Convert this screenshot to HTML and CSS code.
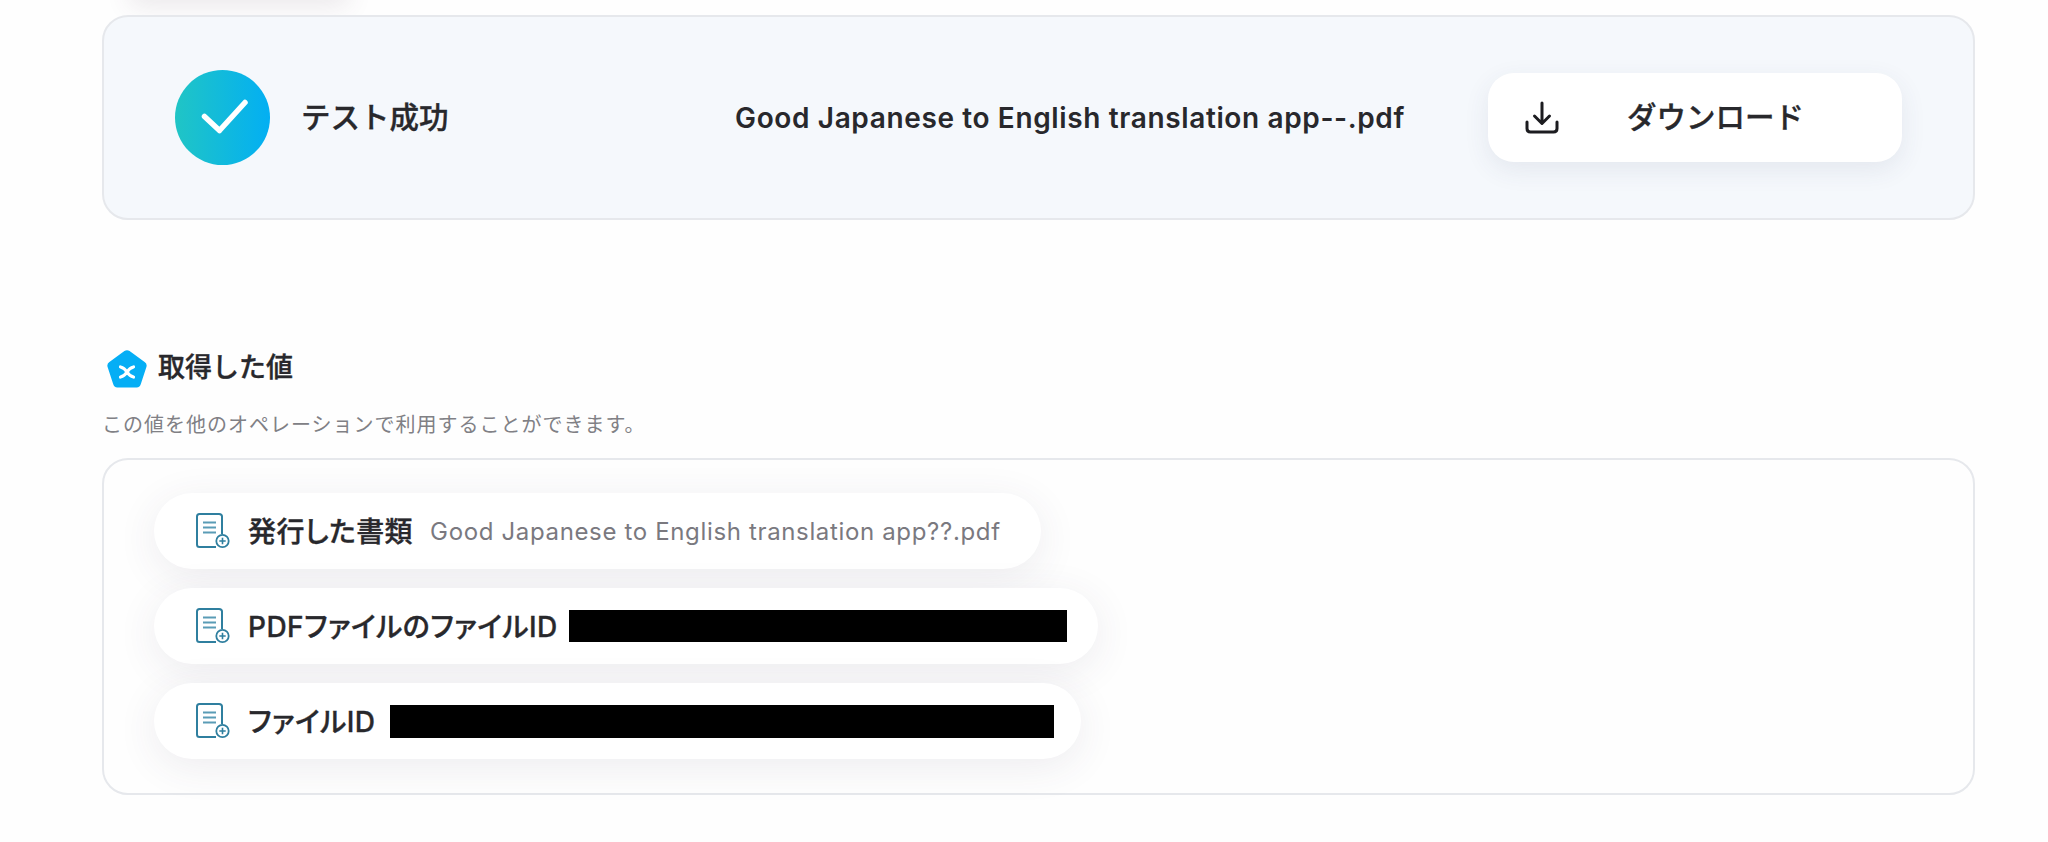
FILE: index.html
```html
<!DOCTYPE html>
<html lang="ja">
<head>
    <meta charset="UTF-8">
    <meta name="viewport" content="width=device-width, initial-scale=1.0">
    <title>テスト成功</title>
    <link rel="stylesheet" href="styles.css">
</head>
<body>
    <main class="page">
        <!-- Bottom edge of the element scrolled off above -->
        <div class="scrolled-shadow"></div>

        <section class="result-card">
            <svg class="check-badge" viewBox="0 0 95 95" aria-hidden="true">
                <defs>
                    <linearGradient id="badgeFill" x1="0" y1="0" x2="1" y2="0">
                        <stop offset="0" stop-color="#20c5c5"/>
                        <stop offset="1" stop-color="#03aff3"/>
                    </linearGradient>
                </defs>
                <circle cx="47.5" cy="47.5" r="47.5" fill="url(#badgeFill)"/>
                <path d="M29.5 46.5 L44.5 60.5 L70 32.5" fill="none" stroke="#fff" stroke-width="5.5" stroke-linecap="round" stroke-linejoin="round"/>
            </svg>
            <h2 class="result-title">テスト成功</h2>
            <span class="result-file">Good Japanese to English translation app--.pdf</span>
            <button class="download-button" type="button">
                <svg class="download-icon" viewBox="0 0 34 34" aria-hidden="true">
                    <path d="M17 2 V22 M9.5 15 L17 22.5 L24.5 15 M2 21 V27.5 Q2 31 5.5 31 H28.5 Q32 31 32 27.5 V21" fill="none" stroke="#1c1c20" stroke-width="3" stroke-linecap="round" stroke-linejoin="round"/>
                </svg>
                <span class="download-label">ダウンロード</span>
            </button>
        </section>

        <section class="values">
            <div class="values-heading">
                <svg class="values-icon" viewBox="0 0 40 38" aria-hidden="true">
                    <path d="M17.4 1 Q20 -0.6 22.6 1 L37.6 12 Q40.4 14 39.4 17 L34 33.6 Q33 37.6 29.6 37.6 L10.4 37.6 Q7 37.6 6 33.6 L0.6 17 Q-0.4 14 2.4 12 Z" fill="#05aef5"/>
                    <path d="M13.5 17 Q17.5 18 20 22 Q22.5 26 26.5 27 M26.5 17 Q22.5 18 20 22 Q17.5 26 13.5 27" fill="none" stroke="#fff" stroke-width="3.2" stroke-linecap="round"/>
                </svg>
                <h3 class="values-title">取得した値</h3>
            </div>
            <p class="values-note">この値を他のオペレーションで利用することができます。</p>

            <div class="values-box">
                <div class="value-pill">
                    <svg class="doc-icon" viewBox="0 0 34 36" aria-hidden="true"><use href="#docIcon"/></svg>
                    <span class="value-name">発行した書類</span>
                    <span class="value-text">Good Japanese to English translation app??.pdf</span>
                </div>
                <div class="value-pill">
                    <svg class="doc-icon" viewBox="0 0 34 36" aria-hidden="true"><use href="#docIcon"/></svg>
                    <span class="value-name">PDFファイルのファイルID</span>
                    <span class="redacted redacted-pdf"></span>
                </div>
                <div class="value-pill">
                    <svg class="doc-icon" viewBox="0 0 34 36" aria-hidden="true"><use href="#docIcon"/></svg>
                    <span class="value-name">ファイルID</span>
                    <span class="redacted redacted-file"></span>
                </div>
            </div>
        </section>
    </main>

    <svg class="svg-defs" aria-hidden="true">
        <symbol id="docIcon" viewBox="0 0 34 36">
            <path d="M20 34 H3.5 Q1 34 1 31.5 V3.5 Q1 1 3.5 1 H23 Q26 1 26 3.5 V21" fill="none" stroke="#2f7f9f" stroke-width="2"/>
            <path d="M7 9.5 H20 M7 14.5 H20 M7 19.5 H20" fill="none" stroke="#5a9cb6" stroke-width="2"/>
            <circle cx="26.5" cy="28" r="6.2" fill="#fff" stroke="#2f7f9f" stroke-width="1.8"/>
            <path d="M26.5 24.8 V31.2 M23.3 28 H29.7" fill="none" stroke="#2f7f9f" stroke-width="1.6"/>
        </symbol>
    </svg>
</body>
</html>
```

FILE: styles.css
```css
* {
    box-sizing: border-box;
}
html, body {
    height: 100%;
    overflow: hidden;
}
body {
    margin: 0;
    background: #fefefe;
    color: #28282c;
    font-family: Inter, 'Noto Sans CJK JP', sans-serif;
}
.page {
    padding: 15px 73px 0 102px;
}
.scrolled-shadow {
    width: 190px;
    height: 0;
    margin: -24px 0 24px 42px;
    box-shadow: 0 0 26px 14px rgba(80, 60, 80, 0.12);
}
.svg-defs {
    display: none;
}

/* Result card */
.result-card {
    display: flex;
    align-items: center;
    height: 205px;
    padding: 0 71px 0 71px;
    background: #f5f8fc;
    border: 2px solid #e6e8ec;
    border-radius: 26px;
}
.check-badge {
    flex: none;
    width: 95px;
    height: 95px;
    margin-right: 31px;
}
.result-title {
    margin: 0;
    padding-bottom: 5px;
    font-size: 29.5px;
    font-weight: 500;
    -webkit-text-stroke: 0.35px #28282c;
}
.result-file {
    margin-left: auto;
    margin-right: 83px;
    font-size: 28px;
    font-weight: 600;
    letter-spacing: 0.63px;
}
.download-button {
    display: flex;
    align-items: center;
    width: 414px;
    height: 89px;
    padding: 0 0 0 37px;
    background: #fff;
    border: none;
    border-radius: 26px;
    box-shadow: 0 8px 26px rgba(60, 70, 100, 0.09);
    color: inherit;
    font-family: inherit;
}
.download-icon {
    flex: none;
    width: 34px;
    height: 34px;
    margin-right: 68px;
}
.download-label {
    padding-bottom: 5px;
    font-size: 29.5px;
    font-weight: 500;
    -webkit-text-stroke: 0.35px #28282c;
}

/* Values section */
.values {
    margin-top: 129px;
}
.values-heading {
    display: flex;
    align-items: center;
    gap: 11px;
    margin-left: 5px;
}
.values-icon {
    flex: none;
    width: 40px;
    height: 38px;
}
.values-title {
    margin: 0;
    padding-bottom: 1px;
    font-size: 27px;
    font-weight: 500;
    line-height: 38px;
    -webkit-text-stroke: 0.35px #28282c;
}
.values-note {
    margin: 22px 0 0;
    color: #808085;
    font-size: 20px;
    letter-spacing: 1px;
    line-height: 30px;
}
.values-box {
    display: flex;
    flex-direction: column;
    align-items: flex-start;
    gap: 19px;
    height: 337px;
    margin-top: 18px;
    padding: 33px 0 0 50px;
    background: #fefefe;
    border: 2px solid #e6e8ec;
    border-radius: 26px;
}
.value-pill {
    display: flex;
    align-items: center;
    height: 76px;
    padding: 0 31px 0 42px;
    background: #fff;
    border-radius: 38px;
    box-shadow: 0 8px 40px rgba(70, 60, 90, 0.09);
}
.doc-icon {
    flex: none;
    width: 34px;
    height: 36px;
    margin-right: 18px;
}
.value-name {
    padding-bottom: 2px;
    font-size: 28px;
    font-weight: 500;
    font-feature-settings: "palt";
    letter-spacing: 0.45px;
    white-space: nowrap;
    -webkit-text-stroke: 0.35px #28282c;
}
.value-text {
    margin-left: 17px;
    margin-right: 9px;
    color: #7a797f;
    font-size: 24px;
    letter-spacing: 0.65px;
    white-space: nowrap;
}
.redacted {
    background: #000;
}
.redacted-pdf {
    width: 498px;
    height: 32px;
    margin-left: 11px;
}
.redacted-file {
    width: 664px;
    height: 33px;
    margin: 0 -4px 0 14px;
}
```
